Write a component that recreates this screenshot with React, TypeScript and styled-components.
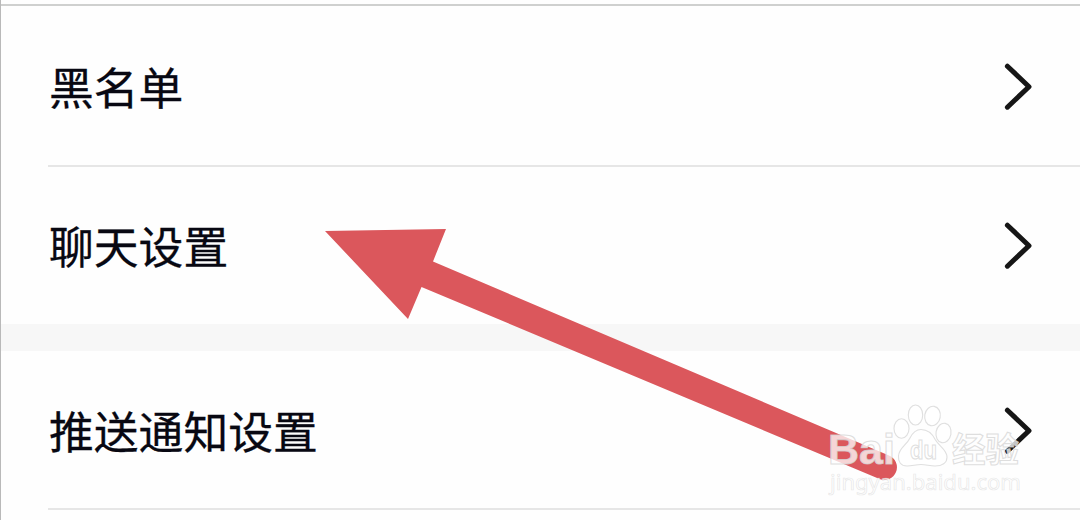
import * as React from 'react'
import styled, { createGlobalStyle } from 'styled-components'

const GlobalStyle = createGlobalStyle`
  body {
    margin: 0;
    background: #fefefe;
  }

  * {
    box-sizing: border-box;
  }
`

const Screen = styled.main`
  position: relative;
  width: 1080px;
  height: 520px;
  overflow: hidden;
  padding-top: 4px;
  border-left: 1px solid #b9b9b9;
  background: #fefefe;
  font-family: 'Noto Sans CJK SC', sans-serif;
`

const TopLine = styled.div`
  height: 2px;
  background: #cfd0cf;
`

const Row = styled.div<{ $height: number, $offset?: number }>`
  display: flex;
  align-items: center;
  justify-content: space-between;
  height: ${props => props.$height}px;
  padding: ${props => props.$offset || 0}px 48px 0 48px;
`

const Label = styled.span`
  padding-bottom: 2px;
  color: #080812;
  font-size: 44.8px;
  line-height: 60px;
  white-space: nowrap;
  -webkit-text-stroke: 0.3px #080812;
`

const Divider = styled.div`
  height: 2px;
  margin-left: 47px;
  background: #e6e6e6;
`

const SectionGap = styled.div`
  height: 27px;
  background: #f7f7f7;
`

const ChevronIcon = styled.svg`
  display: block;
  flex: none;
`

const Overlay = styled.svg`
  position: absolute;
  top: 0;
  left: -1px;
  pointer-events: none;
`

function Chevron () {
  return (
    <ChevronIcon width='28' height='48' viewBox='0 0 28 48' fill='none'>
      <path d='M3.4 3.2 25 23.7 3.4 44.2' stroke='#161616' strokeWidth='5' strokeLinecap='round' strokeLinejoin='round' />
    </ChevronIcon>
  )
}

function Arrow () {
  return (
    <Overlay width='1080' height='520' viewBox='0 0 1080 520'>
      <path d='M325 231 446 229 433 261.500 889 455.500A12.600 12.600 0 0 1 879.500 479L421.500 287 408 319Z' fill='#db575c' />
    </Overlay>
  )
}

function Watermark () {
  return (
    <Overlay width='1080' height='520' viewBox='0 0 1080 520'>
      <g fill='#fff' fillOpacity='0.76' stroke='#d4d4d4' strokeOpacity='0.75' strokeWidth='1.1'>
        <ellipse cx='901.500' cy='428.500' rx='7.500' ry='9.800' />
        <ellipse cx='915.500' cy='415' rx='7.200' ry='10' />
        <ellipse cx='932.500' cy='416' rx='7.800' ry='9.800' transform='rotate(10 932.500 416)' />
        <ellipse cx='943.500' cy='433' rx='7.500' ry='9.800' transform='rotate(10 943.500 433)' />
        <path d='M921 429.500C928 429.500 932 433 935.500 440 939 446 947 450 947 457 947 463 942 466 935 466 930 466 926 464.500 921 464.500S912 466 907 466C901 466 898 462 898.500 456 899 448 906 446 910 438 913 432 916 429.500 921 429.500Z' />
        <text x='828' y='464' fontFamily='"Liberation Sans", sans-serif' fontSize='43' fontWeight='700' textLength='67' lengthAdjust='spacingAndGlyphs'>Bai</text>
        <text x='910' y='459' fontFamily='"Liberation Sans", sans-serif' fontSize='26' fontWeight='700' textLength='27' lengthAdjust='spacingAndGlyphs'>du</text>
        <text x='952' y='462' fontFamily='"Noto Sans CJK SC", sans-serif' fontSize='34' fontWeight='700' textLength='67' lengthAdjust='spacingAndGlyphs'>经验</text>
        <text x='830' y='490' fontFamily='"Noto Sans", sans-serif' fontSize='21.500' strokeOpacity='0.55' strokeWidth='0.7' textLength='191' lengthAdjust='spacingAndGlyphs'>jingyan.baidu.com</text>
      </g>
    </Overlay>
  )
}

export default function App () {
  return (
    <>
      <GlobalStyle />
      <Screen>
        <TopLine />
        <Row $height={159} $offset={2}>
          <Label>黑名单</Label>
          <Chevron />
        </Row>
        <Divider />
        <Row $height={157}>
          <Label>聊天设置</Label>
          <Chevron />
        </Row>
        <SectionGap />
        <Row $height={157} $offset={3}>
          <Label>推送通知设置</Label>
          <Chevron />
        </Row>
        <Divider />
        <Arrow />
        <Watermark />
      </Screen>
    </>
  )
}
